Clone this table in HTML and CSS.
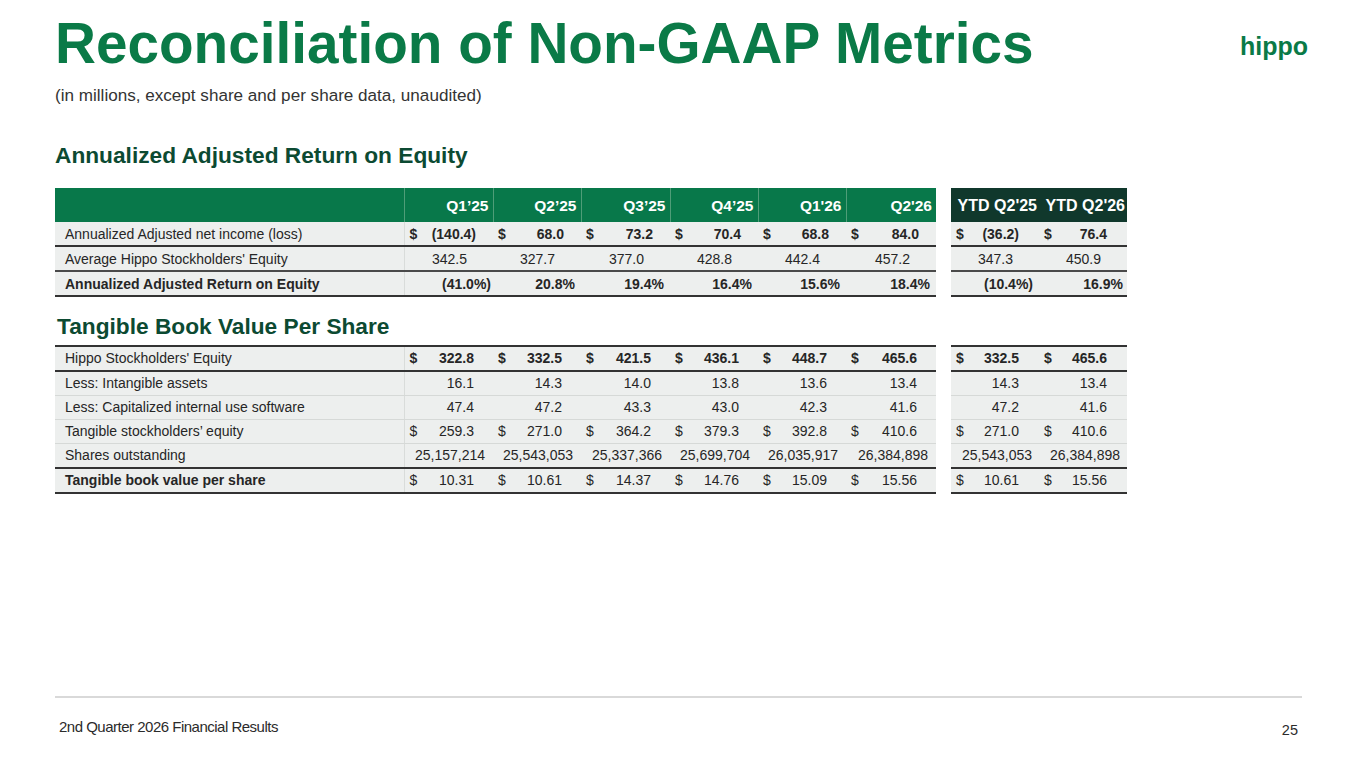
FILE: index.html
```html
<!DOCTYPE html>
<html lang="en">
<head>
<meta charset="utf-8">
<title>Reconciliation of Non-GAAP Metrics</title>
<link rel="stylesheet" href="styles.css">
</head>
<body>
<div class="slide">
  <header class="top">
    <h1 class="title">Reconciliation of Non-GAAP Metrics</h1>
    <div class="logo">hippo</div>
  </header>
  <p class="subtitle">(in millions, except share and per share data, unaudited)</p>

  <h2 class="section">Annualized Adjusted Return on Equity</h2>
  <table class="fin t1">
    <colgroup>
      <col class="c-lab"><col class="c89"><col class="c88"><col class="c89"><col class="c88"><col class="c88"><col class="c90"><col class="c-gap"><col class="c88"><col class="c88">
    </colgroup>
    <thead>
      <tr class="hd">
        <th class="lab"></th>
        <th class="div">Q1’25</th><th>Q2’25</th><th>Q3’25</th><th>Q4’25</th><th>Q1'26</th><th>Q2'26</th>
        <th class="gap"></th>
        <th class="ytd">YTD Q2'25</th><th class="ytd">YTD Q2'26</th>
      </tr>
    </thead>
    <tbody>
      <tr class="b-dark bold-v">
        <td class="lab">Annualized Adjusted net income (loss)</td>
        <td class="first"><div class="c r17"><span>$</span><span>(140.4)</span></div></td>
        <td><div class="c r17"><span>$</span><span>68.0</span></div></td>
        <td><div class="c r17"><span>$</span><span>73.2</span></div></td>
        <td><div class="c r17"><span>$</span><span>70.4</span></div></td>
        <td><div class="c r17"><span>$</span><span>68.8</span></div></td>
        <td><div class="c r17"><span>$</span><span>84.0</span></div></td>
        <td class="gap"></td>
        <td><div class="c r20"><span>$</span><span>(36.2)</span></div></td>
        <td><div class="c r20"><span>$</span><span>76.4</span></div></td>
      </tr>
      <tr class="b-gray">
        <td class="lab">Average Hippo Stockholders' Equity</td>
        <td class="first"><div class="c n r26"><span>342.5</span></div></td>
        <td><div class="c n r26"><span>327.7</span></div></td>
        <td><div class="c n r26"><span>377.0</span></div></td>
        <td><div class="c n r26"><span>428.8</span></div></td>
        <td><div class="c n r26"><span>442.4</span></div></td>
        <td><div class="c n r26"><span>457.2</span></div></td>
        <td class="gap"></td>
        <td><div class="c n r26"><span>347.3</span></div></td>
        <td><div class="c n r26"><span>450.9</span></div></td>
      </tr>
      <tr class="b-dark bold-v bold-l">
        <td class="lab">Annualized Adjusted Return on Equity</td>
        <td class="first"><div class="c n r2"><span>(41.0%)</span></div></td>
        <td><div class="c n r6"><span>20.8%</span></div></td>
        <td><div class="c n r6"><span>19.4%</span></div></td>
        <td><div class="c n r6"><span>16.4%</span></div></td>
        <td><div class="c n r6"><span>15.6%</span></div></td>
        <td><div class="c n r6"><span>18.4%</span></div></td>
        <td class="gap"></td>
        <td><div class="c n r6"><span>(10.4%)</span></div></td>
        <td><div class="c n r4"><span>16.9%</span></div></td>
      </tr>
    </tbody>
  </table>

  <h2 class="section s2">Tangible Book Value Per Share</h2>
  <table class="fin t2">
    <colgroup>
      <col class="c-lab"><col class="c89"><col class="c88"><col class="c89"><col class="c88"><col class="c88"><col class="c90"><col class="c-gap"><col class="c88"><col class="c88">
    </colgroup>
    <tbody>
      <tr class="b-dark t-dark bold-v">
        <td class="lab">Hippo Stockholders' Equity</td>
        <td class="first"><div class="c r19"><span>$</span><span>322.8</span></div></td>
        <td><div class="c r19"><span>$</span><span>332.5</span></div></td>
        <td><div class="c r19"><span>$</span><span>421.5</span></div></td>
        <td><div class="c r19"><span>$</span><span>436.1</span></div></td>
        <td><div class="c r19"><span>$</span><span>448.7</span></div></td>
        <td><div class="c r19"><span>$</span><span>465.6</span></div></td>
        <td class="gap"></td>
        <td><div class="c r20"><span>$</span><span>332.5</span></div></td>
        <td><div class="c r20"><span>$</span><span>465.6</span></div></td>
      </tr>
      <tr class="b-light">
        <td class="lab">Less: Intangible assets</td>
        <td class="first"><div class="c n r19"><span>16.1</span></div></td>
        <td><div class="c n r19"><span>14.3</span></div></td>
        <td><div class="c n r19"><span>14.0</span></div></td>
        <td><div class="c n r19"><span>13.8</span></div></td>
        <td><div class="c n r19"><span>13.6</span></div></td>
        <td><div class="c n r19"><span>13.4</span></div></td>
        <td class="gap"></td>
        <td><div class="c n r20"><span>14.3</span></div></td>
        <td><div class="c n r20"><span>13.4</span></div></td>
      </tr>
      <tr class="b-light">
        <td class="lab">Less: Capitalized internal use software</td>
        <td class="first"><div class="c n r19"><span>47.4</span></div></td>
        <td><div class="c n r19"><span>47.2</span></div></td>
        <td><div class="c n r19"><span>43.3</span></div></td>
        <td><div class="c n r19"><span>43.0</span></div></td>
        <td><div class="c n r19"><span>42.3</span></div></td>
        <td><div class="c n r19"><span>41.6</span></div></td>
        <td class="gap"></td>
        <td><div class="c n r20"><span>47.2</span></div></td>
        <td><div class="c n r20"><span>41.6</span></div></td>
      </tr>
      <tr class="b-light">
        <td class="lab">Tangible stockholders’ equity</td>
        <td class="first"><div class="c r19"><span>$</span><span>259.3</span></div></td>
        <td><div class="c r19"><span>$</span><span>271.0</span></div></td>
        <td><div class="c r19"><span>$</span><span>364.2</span></div></td>
        <td><div class="c r19"><span>$</span><span>379.3</span></div></td>
        <td><div class="c r19"><span>$</span><span>392.8</span></div></td>
        <td><div class="c r19"><span>$</span><span>410.6</span></div></td>
        <td class="gap"></td>
        <td><div class="c r20"><span>$</span><span>271.0</span></div></td>
        <td><div class="c r20"><span>$</span><span>410.6</span></div></td>
      </tr>
      <tr class="b-dark">
        <td class="lab">Shares outstanding</td>
        <td class="first"><div class="c n r8"><span>25,157,214</span></div></td>
        <td><div class="c n r8"><span>25,543,053</span></div></td>
        <td><div class="c n r8"><span>25,337,366</span></div></td>
        <td><div class="c n r8"><span>25,699,704</span></div></td>
        <td><div class="c n r8"><span>26,035,917</span></div></td>
        <td><div class="c n r8"><span>26,384,898</span></div></td>
        <td class="gap"></td>
        <td><div class="c n r7"><span>25,543,053</span></div></td>
        <td><div class="c n r7"><span>26,384,898</span></div></td>
      </tr>
      <tr class="b-dark bold-l">
        <td class="lab">Tangible book value per share</td>
        <td class="first"><div class="c r19"><span>$</span><span>10.31</span></div></td>
        <td><div class="c r19"><span>$</span><span>10.61</span></div></td>
        <td><div class="c r19"><span>$</span><span>14.37</span></div></td>
        <td><div class="c r19"><span>$</span><span>14.76</span></div></td>
        <td><div class="c r19"><span>$</span><span>15.09</span></div></td>
        <td><div class="c r19"><span>$</span><span>15.56</span></div></td>
        <td class="gap"></td>
        <td><div class="c r20"><span>$</span><span>10.61</span></div></td>
        <td><div class="c r20"><span>$</span><span>15.56</span></div></td>
      </tr>
    </tbody>
  </table>

  <footer class="foot">
    <span class="foot-text">2nd Quarter 2026 Financial Results</span>
    <span class="page-num">25</span>
  </footer>
</div>
</body>
</html>
```

FILE: styles.css
```css
html, body {
  margin: 0;
  padding: 0;
  background: #ffffff;
}

.slide {
  width: 1365px;
  height: 768px;
  box-sizing: border-box;
  padding: 0 57px 0 55px;
  display: flex;
  flex-direction: column;
  overflow: hidden;
  font-family: "Liberation Sans", Arial, sans-serif;
  color: #262626;
}

.top {
  display: flex;
  justify-content: space-between;
  align-items: flex-start;
}

.title {
  margin: 16px 0 0 0;
  font-size: 56.7px;
  line-height: 1;
  font-weight: 700;
  color: #0a7a47;
  letter-spacing: 0;
}

.logo {
  margin-top: 34px;
  font-size: 25px;
  line-height: 1;
  font-weight: 700;
  color: #0a7a47;
  letter-spacing: 0;
}

.subtitle {
  margin: 13px 0 0 0;
  font-size: 17.1px;
  line-height: 20px;
  color: #333333;
}

.section {
  margin: 36.5px 0 0 0;
  font-size: 22.7px;
  line-height: 26px;
  font-weight: 700;
  color: #0c4a32;
}

.section.s2 {
  margin: 15.5px 0 0 2px;
}

/* tables */
.fin {
  width: 1072px;
  table-layout: fixed;
  border-collapse: collapse;
  font-size: 14px;
  color: #262626;
}

.t1 {
  margin-top: 20px;
}

.t2 {
  margin-top: 6px;
}

.c-lab { width: 349px; }
.c88 { width: 88px; }
.c89 { width: 89px; }
.c90 { width: 90px; }
.c-gap { width: 15px; }

.fin th,
.fin td {
  padding: 0;
  white-space: nowrap;
  overflow: visible;
}

.hd th {
  height: 34px;
  box-sizing: border-box;
  padding: 2px 4px 0 0;
  background: #08784a;
  color: #ffffff;
  font-size: 15.5px;
  font-weight: 700;
  text-align: right;
  vertical-align: middle;
  border-left: 1px solid #4f9d78;
}

.hd th.lab {
  border-left: none;
}

.hd th.gap {
  background: #ffffff;
  border-left: none;
}

.hd th.ytd {
  background: #10382c;
  border-left: none;
  padding-right: 2px;
  font-size: 16px;
}

.fin tbody td {
  height: 23px;
  background: #edefee;
  vertical-align: middle;
}

.fin tbody td.gap {
  background: #ffffff;
  border-bottom: none;
  border-top: none;
}

.fin tbody td.first {
  border-left: 1px solid #d9dcda;
}

.fin td.lab {
  padding-left: 10px;
}

.b-dark td { border-bottom: 2px solid #333333; }
.b-gray td { border-bottom: 2px solid #4a4a4a; }
.b-light td { border-bottom: 1px solid #d6d9d7; }
.t-dark td { border-top: 2px solid #333333; }

.bold-v td .c { font-weight: 700; }
.bold-l td.lab { font-weight: 700; }

.c {
  display: flex;
  justify-content: space-between;
  align-items: center;
  padding-left: 5px;
}

.c.n {
  justify-content: flex-end;
}

.r2 { padding-right: 2px; }
.r4 { padding-right: 4px; }
.r6 { padding-right: 6px; }
.r7 { padding-right: 7px; }
.r8 { padding-right: 8px; }
.r17 { padding-right: 17px; }
.r19 { padding-right: 19px; }
.r20 { padding-right: 20px; }
.r26 { padding-right: 26px; }

/* footer */
.foot {
  margin-top: auto;
  margin-right: 6px;
  margin-bottom: 29px;
  border-top: 2px solid #d9d9d9;
  padding-top: 20px;
  display: flex;
  justify-content: space-between;
  align-items: flex-start;
}

.foot-text {
  padding-left: 4px;
  font-size: 15px;
  line-height: 18px;
  letter-spacing: -0.5px;
  color: #2b2b2b;
}

.page-num {
  margin-top: 3.5px;
  padding-right: 4px;
  font-size: 14.5px;
  line-height: 18px;
  color: #2b2b2b;
}
```
